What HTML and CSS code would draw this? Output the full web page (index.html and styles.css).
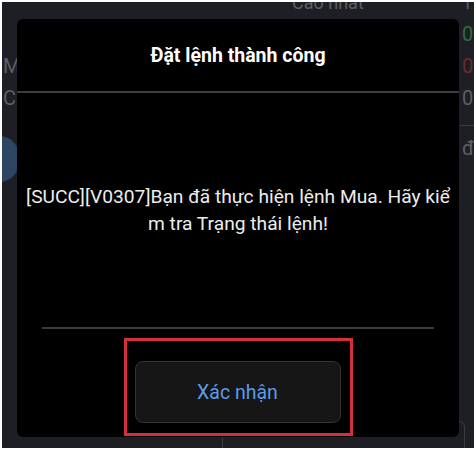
FILE: index.html
```html
<!DOCTYPE html>
<html>

<head>
    <meta charset="utf-8">
    <link rel="stylesheet" href="styles.css">
</head>

<body>

    <div class="screen">

        <!-- app screen behind the dialog -->
        <div class="backdrop">
            <div class="row top-row">
                <span class="label">Cao nhất</span>
                <span class="value">11,950</span>
            </div>
            <div class="row">
                <span class="label"></span>
                <span class="value green">0</span>
            </div>
            <div class="row">
                <span class="label">M</span>
                <span class="value red">0</span>
            </div>
            <div class="row">
                <span class="label">C</span>
                <span class="value">0</span>
            </div>
            <div class="row rule-row">
                <span class="rule"></span>
            </div>
            <div class="row pill-row">
                <span class="pill"></span>
                <span class="value">đ</span>
            </div>
            <div class="bottom-box"></div>
        </div>

        <div class="dialog">
            <header class="dialog-header">
                <h1>Đặt lệnh thành công</h1>
            </header>
            <div class="dialog-body">
                <p>[SUCC][V0307]Bạn đã thực hiện lệnh Mua. Hãy kiểm tra Trạng thái lệnh!</p>
            </div>
            <div class="dialog-footer">
                <div class="highlight">
                    <button class="confirm">Xác nhận</button>
                </div>
            </div>
        </div>

    </div>

</body>

</html>
```

FILE: styles.css
```css
body {
    margin: 0;
    padding: 2px 0 2px 2px;
    background-color: white;
    font-family: Roboto, "Noto Sans", sans-serif;
}

.screen {
    width: 472px;
    height: 446px;
    background-color: #1e1f24;
    position: relative;
    overflow: hidden;
}

/* background screen */
.backdrop {
    display: flex;
    flex-direction: column;
    color: #5c5e64;
    font-size: 20px;
}

.row {
    display: flex;
    justify-content: space-between;
    align-items: center;
    height: 32px;
    padding: 0 0 0 1px;
}

.top-row {
    height: 16px;
    align-items: flex-end;
    line-height: 16px;
    font-size: 18px;
    padding-left: 290px;
    gap: 40px;
}

.top-row .label,
.top-row .value {
    margin-bottom: 7px;
}

.value {
    width: 12px;
    margin-right: 0;
}

.green {
    color: #2f6a43;
}

.red {
    color: #6b2a31;
}

.rule-row {
    height: 22px;
    justify-content: flex-end;
}

.rule {
    width: 14px;
    height: 1px;
    background-color: #3a3c42;
}

.pill-row {
    height: 46px;
    align-items: flex-start;
}

.pill {
    width: 40px;
    height: 46px;
    margin-left: -24px;
    border-radius: 23px;
    background-color: #2c4663;
}

.bottom-box {
    margin: 239px 9px 0 220px;
    height: 30px;
    border: 1px solid #3a3c42;
    border-radius: 6px;
}

/* dialog */
.dialog {
    position: absolute;
    left: 15px;
    top: 17px;
    width: 442px;
    height: 418px;
    background-color: #000;
    border-radius: 6px;
    display: flex;
    flex-direction: column;
    color: white;
}

.dialog-header {
    height: 72px;
    display: flex;
    align-items: center;
    justify-content: center;
    border-bottom: 2px solid #3c3c3c;
}

.dialog-header h1 {
    margin: 0;
    font-size: 19.5px;
    font-weight: bold;
}

.dialog-body {
    flex: 1;
    display: flex;
    align-items: center;
    justify-content: center;
    margin: 0 25px 0 25px;
    border-bottom: 2px solid #3c3c3c;
}

.dialog-body p {
    margin: 0 -19px;
    text-align: center;
    font-size: 19.2px;
    line-height: 27px;
    color: #ededed;
    word-break: break-all;
}

.dialog-footer {
    padding: 9px 0 1px 0;
}

.highlight {
    width: 229px;
    height: 98px;
    margin: 0 auto;
    border: 3px solid #d4303c;
    box-sizing: border-box;
    padding: 20px 9px 0 8px;
}

.confirm {
    width: 100%;
    height: 62px;
    background-color: #161616;
    border: 1px solid #333;
    border-radius: 8px;
    color: #5b9be8;
    font-family: Roboto, "Noto Sans", sans-serif;
    font-size: 19.5px;
}
```
